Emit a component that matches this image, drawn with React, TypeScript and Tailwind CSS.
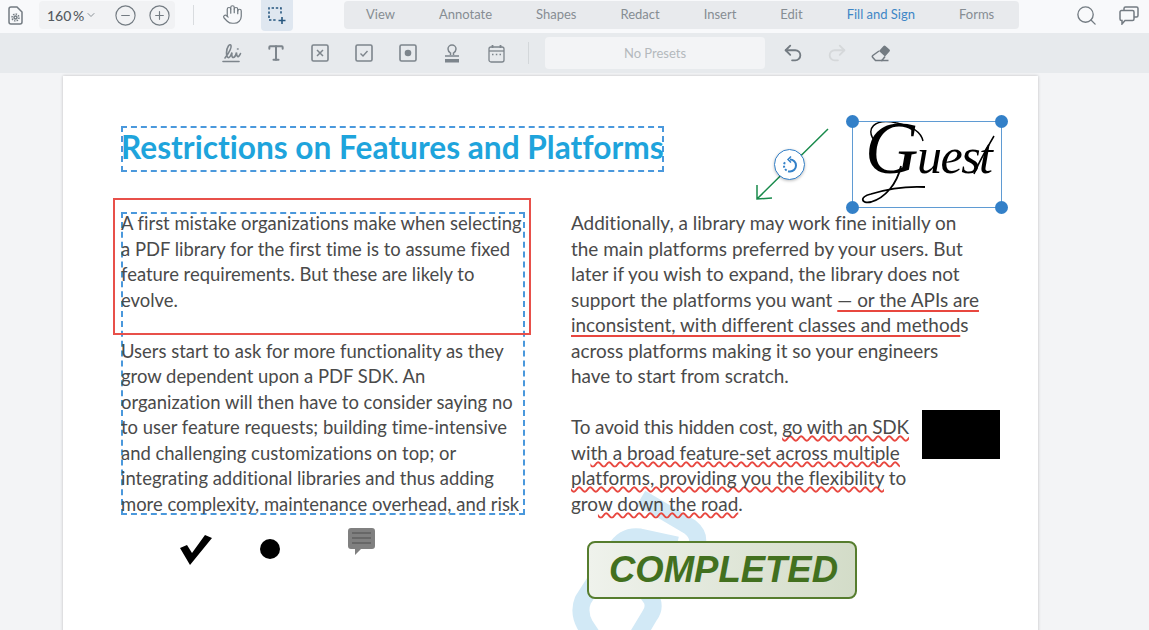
import { ChevronDown, CircleMinus, CirclePlus, Hand, Search, Undo2, Redo2, Type } from "lucide-react";

const tabs = ["View", "Annotate", "Shapes", "Redact", "Insert", "Edit", "Fill and Sign", "Forms"];

function BoxIcon({ children }: { children: React.ReactNode }) {
  return (
    <svg width="18" height="18" viewBox="0 0 18 18" fill="none" stroke="#7d858c">
      <rect x="1" y="1" width="16" height="16" rx="1.5" strokeWidth="1.6" />
      {children}
    </svg>
  );
}

function TopBar() {
  return (
    <div className="flex h-[33px] items-start bg-[#f8f9fb]">
      <svg className="ml-[8px] mt-[6px]" width="15" height="19" viewBox="0 0 15 19" fill="none" stroke="#737b82" strokeWidth="1.5">
        <path d="M1 3a2 2 0 0 1 2-2h6l5 5v10a2 2 0 0 1-2 2H3a2 2 0 0 1-2-2z" />
        <circle cx="7.5" cy="11.500" r="1.500" />
        <circle cx="7.5" cy="11.500" r="3.500" strokeDasharray="1.500 1.200" />
      </svg>
      <div className="ml-[16px] mt-px flex h-[28px] w-[136px] items-center rounded bg-[#f1f2f4] pl-[8px] text-[#555b61]">
        <span className="w-[36px] whitespace-nowrap text-[14px] font-medium [word-spacing:-2px]">160 %</span>
        <ChevronDown className="ml-[2px] text-[#8a9197]" size={12} />
        <CircleMinus className="ml-[17px] text-[#737b82]" size={23} strokeWidth={1.2} />
        <CirclePlus className="ml-[11px] text-[#737b82]" size={23} strokeWidth={1.2} />
      </div>
      <div className="ml-[18px] mt-[5px] h-[20px] w-px bg-[#d9dcdf]" />
      <Hand className="ml-[28px] mt-[4px] text-[#737b82]" size={21} strokeWidth={1.4} />
      <div className="ml-[18px] flex h-[31px] w-[32px] items-center justify-center rounded-b bg-[#dfe7f0]">
        <svg width="18" height="18" viewBox="0 0 18 18" fill="none" stroke="#27577f" strokeWidth="1.6">
          <path d="M1 11V1h12v7" strokeDasharray="2.4 1.8" />
          <path d="M1 13h8" strokeDasharray="2.4 1.8" />
          <path d="M14 10v7M10.5 13.5h7" />
        </svg>
      </div>
      <div className="ml-[51px] mt-px flex h-[28px] w-[675px] items-center rounded bg-[#e8eaed] text-[13px] text-[#868d93]">
        {tabs.map((tab) => (
          <span key={tab} className={`px-[22px] ${tab === "Fill and Sign" ? "text-[#3e86c6]" : ""}`}>
            {tab}
          </span>
        ))}
      </div>
      <Search className="ml-[56px] mt-[4px] text-[#737b82]" size={23} strokeWidth={1.4} />
      <svg className="ml-[21px] mt-[6px]" width="20" height="19" viewBox="0 0 20 19" fill="none" stroke="#737b82" strokeWidth="1.5">
        <path d="M5 4V2.5A1.5 1.5 0 0 1 6.5 1h11A1.5 1.5 0 0 1 19 2.5v7a1.5 1.5 0 0 1-1.5 1.5H15" />
        <path d="M2.5 4.500h11A1.5 1.5 0 0 1 15 6v7a1.500 1.500 0 0 1-1.500 1.500H6L3 18v-3.500h-.5A1.500 1.500 0 0 1 1 13V6a1.500 1.500 0 0 1 1.500-1.500z" />
      </svg>
    </div>
  );
}

function SecondBar() {
  return (
    <div className="flex h-[40px] items-center bg-[#e7eaed] pl-[210px]">
      <div className="flex h-[24px] w-[44px] items-center justify-center">
        <svg width="20" height="20" viewBox="0 0 20 20" fill="none" stroke="#7d858c" strokeWidth="1.6" strokeLinecap="round">
          <path d="M3 15C6 11 10 5 9 2.500S4.500 4 4.500 10c0 3 1 5 2.500 4.500s2-3 3-5c-.5 3 0 5.500 1.500 5s2.500-2.500 3-5c0 3 1 4.500 2 4s1.500-2 2-3" />
          <path d="M15.500 6h.6" />
          <path d="M1 18.500h16" />
        </svg>
      </div>
      <div className="flex h-[24px] w-[44px] items-center justify-center">
        <Type className="text-[#7d858c]" size={20} strokeWidth={2.4} />
      </div>
      <div className="flex h-[24px] w-[44px] items-center justify-center">
        <BoxIcon>
          <path d="M6 6l6 6M12 6l-6 6" strokeWidth="1.5" />
        </BoxIcon>
      </div>
      <div className="flex h-[24px] w-[44px] items-center justify-center">
        <BoxIcon>
          <path d="M5.500 9.500l2.500 2.500 4.500-5" strokeWidth="1.4" />
        </BoxIcon>
      </div>
      <div className="flex h-[24px] w-[44px] items-center justify-center">
        <BoxIcon>
          <circle cx="9" cy="9" r="3.300" fill="#7d858c" stroke="none" />
        </BoxIcon>
      </div>
      <div className="flex h-[24px] w-[44px] items-center justify-center">
        <svg width="16" height="19" viewBox="0 0 16 19" fill="none" stroke="#7d858c" strokeWidth="1.500">
          <path d="M6.500 11V9C5 8 4 7 4 5a4 4 0 0 1 8 0c0 2-1 3-2.500 4v2" />
          <path d="M1 12h14" />
          <path d="M1 15h14v3.500H1z" fill="#7d858c" stroke="none" />
        </svg>
      </div>
      <div className="flex h-[24px] w-[44px] items-center justify-center">
        <svg width="17" height="19" viewBox="0 0 17 19" fill="none" stroke="#7d858c" strokeWidth="1.300">
          <rect x="1" y="3" width="15" height="15" rx="2" />
          <path d="M1 7h15" />
          <path d="M4.500 1v3M12.500 1v3" strokeWidth="1.800" />
          <path d="M4 10.500h1.500M7.800 10.500h1.500M11.500 10.500H13" strokeWidth="1.500" />
        </svg>
      </div>
      <div className="ml-[10px] h-[22px] w-px bg-[#d3d7da]" />
      <div className="ml-[16px] flex h-[32px] w-[220px] items-center justify-center rounded bg-[#f3f4f6] pt-px text-[13px] text-[#b4b9bd]">
        No Presets
      </div>
      <Undo2 className="ml-[17px] text-[#737b82]" size={22} strokeWidth={2} />
      <Redo2 className="ml-[22px] text-[#d5d8da]" size={22} strokeWidth={2} />
      <svg className="ml-[23px]" width="20" height="18" viewBox="0 0 20 18" fill="none">
        <path d="M8 7l4.500-5q1-1 2 0l4 3.500q1 1 0 2L14 12.500z" fill="#737b82" />
        <path d="M8 7L1.800 11.500q-1 1 0 2L4.500 16.500h6.500l3-4" stroke="#737b82" strokeWidth="1.500" />
        <path d="M10 16.500h7.500" stroke="#737b82" strokeWidth="1.500" />
      </svg>
    </div>
  );
}

function Page() {
  return (
    <div className="relative ml-[63px] mt-[3px] h-[560px] w-[975px] overflow-hidden bg-white pl-[58px] pt-[50px] shadow-[0_0_3px_rgba(0,0,0,0.22)] [font-variant-ligatures:none]">
      {/* watermark behind the text */}
      <svg className="absolute left-[490px] top-[400px]" width="240" height="160" viewBox="0 0 240 160" fill="none" stroke="#d2e9f6" strokeWidth="17" strokeLinejoin="round">
        <path d="M88 22l49 29q10 8 7 18" />
        <path d="M124 69L87 61Q71 59 62 74L30 124Q25 136 32 149L42 164" />
        <path d="M85 114h7l7 10q3 8-2 15L79 169" />
      </svg>

      <h1 className="relative block h-[46px] w-[543px] whitespace-nowrap border-2 border-dashed border-[#4a98dc] text-[31.650px] font-bold leading-[38px] text-[#1ea4dc]">
        <span className="-ml-[2px] inline-block">Restrictions on Features and Platforms</span>
      </h1>

      <div className="relative mt-[40px] grid grid-cols-[450px_400px] leading-[25.500px] text-[#4a4a4a]">
        <div className="h-[303px] w-[404px] border-2 border-dashed border-[#4a98dc] text-[18.450px]">
          <p className="-ml-[2px] -mt-[3px] whitespace-nowrap">
            A first mistake organizations make when selecting
            <br />a PDF library for the first time is to assume fixed
            <br />feature requirements. But these are likely to
            <br />evolve.
          </p>
          <p className="-ml-[2px] mt-[25.500px] whitespace-nowrap">
            Users start to ask for more functionality as they
            <br />grow dependent upon a PDF SDK. An
            <br />organization will then have to consider saying no
            <br />to user feature requests; building time-intensive
            <br />and challenging customizations on top; or
            <br />integrating additional libraries and thus adding
            <br />more complexity, maintenance overhead, and risk
          </p>
        </div>
        <div className="-mt-[2px] whitespace-nowrap text-[18.950px] [text-decoration-skip-ink:none]">
          <p>
            Additionally, a library may work fine initially on
            <br />the main platforms preferred by your users. But
            <br />later if you wish to expand, the library does not
            <br />support the platforms you want{" "}
            <span className="underline decoration-[#e8473f] decoration-[1.500px] underline-offset-[3px]">— or the APIs are</span>
            <br />
            <span className="underline decoration-[#e8473f] decoration-[1.500px] underline-offset-[3px]">inconsistent, with different classes and method</span>s
            <br />across platforms making it so your engineers
            <br />have to start from scratch.
          </p>
          <p className="mt-[25.500px]">
            <span className="tracking-[-0.120px]">
              To avoid this hidden cost,{" "}
              <span className="underline decoration-[#e8473f] decoration-wavy decoration-[1.500px] underline-offset-[1px]">go with an SDK</span>
            </span>
            <br />
            wi<span className="underline decoration-[#e8473f] decoration-wavy decoration-[1.500px] underline-offset-[1px]">th a broad feature-set across multiple</span>
            <br />
            <span className="underline decoration-[#e8473f] decoration-wavy decoration-[1.500px] underline-offset-[1px]">platforms, providing you the flexibility</span> to
            <br />
            gro<span className="underline decoration-[#e8473f] decoration-wavy decoration-[1.500px] underline-offset-[1px]">w down the road</span>.
          </p>
        </div>
      </div>

      {/* annotations sitting on the page */}
      <div className="absolute left-[50px] top-[122px] h-[137px] w-[418px] border-2 border-[#e8504a]" />
      <div className="absolute left-[859px] top-[334px] h-[49px] w-[78px] bg-black" />

      <svg className="absolute left-[116px] top-[456px]" width="34" height="36" viewBox="0 0 34 36" fill="black">
        <path d="M1 16l7-3 5 8L26 3l7 3L11 33z" />
      </svg>
      <div className="absolute left-[197px] top-[463px] h-[20px] w-[20px] rounded-full bg-black" />
      <svg className="absolute left-[284px] top-[451px]" width="29" height="29" viewBox="0 0 29 29">
        <path d="M4 1h21a3 3 0 0 1 3 3v15a3 3 0 0 1-3 3H14l-6 6v-6H4a3 3 0 0 1-3-3V4a3 3 0 0 1 3-3z" fill="#808080" />
        <path d="M5 6h19M5 11h19M5 16h19" stroke="#4f4f4f" strokeWidth="1" />
      </svg>

      <div className="absolute left-[524px] top-[465px] flex h-[58px] w-[270px] items-center justify-center rounded-[8px] border-2 border-[#567d2e] bg-gradient-to-r from-[#eff2ec] to-[#d3dcc8] pl-[3px] font-['Liberation_Sans'] text-[36.500px] font-bold italic text-[#42701f]">
        COMPLETED
      </div>

      {/* rotation guide */}
      <svg className="absolute left-[690px] top-[50px]" width="80" height="76" viewBox="0 0 80 76" fill="none" stroke="#188a4b" strokeWidth="1.500">
        <path d="M75 3L5 72M4 59l0 14 15-1" />
      </svg>
      <div className="absolute left-[711px] top-[73px] flex h-[31px] w-[31px] items-center justify-center rounded-full border border-[#3380c8] bg-white shadow-[0_1px_3px_rgba(0,0,0,0.25)]">
        <svg width="18" height="18" viewBox="0 0 18 18" fill="none" stroke="#3380c8" strokeWidth="2">
          <path d="M9 3.500a6 6 0 0 1 0 12" />
          <path d="M9 15.500a6 6 0 0 1-6-6 6 6 0 0 1 2-4.500" strokeDasharray="2 1.500" />
          <path d="M10 0.500L7 3.500l3 3" strokeWidth="1.500" />
        </svg>
      </div>

      {/* signature */}
      <div className="absolute left-[789px] top-[45px] h-[87px] w-[150px] border border-[#5f9bd3]">
        <svg className="absolute left-0 top-0" width="150" height="85" viewBox="0 0 150 85" fill="none" stroke="black">
          <path d="M24 22C10 6 22 -4 44 1c14 3 24 8 26 18" strokeWidth="1.400" />
          <path d="M48 44C44 62 32 76 18 80c-10 2-12-5 0-8 16-5 36-8 54-7" strokeWidth="1.800" />
          <path d="M141 14C134 26 126 40 121 52" strokeWidth="1.500" />
        </svg>
        <div className="absolute left-[12px] -top-[3px] whitespace-nowrap font-['Liberation_Serif'] text-[50px] italic leading-[58px] tracking-[-1.500px] text-black">
          <span className="text-[74px]">G</span>uest
        </div>
        <span className="absolute -left-[7px] -top-[7px] h-[13px] w-[13px] rounded-full bg-[#3380c8]" />
        <span className="absolute -right-[7px] -top-[7px] h-[13px] w-[13px] rounded-full bg-[#3380c8]" />
        <span className="absolute -bottom-[7px] -left-[7px] h-[13px] w-[13px] rounded-full bg-[#3380c8]" />
        <span className="absolute -bottom-[7px] -right-[7px] h-[13px] w-[13px] rounded-full bg-[#3380c8]" />
      </div>
    </div>
  );
}

export default function App() {
  return (
    <div className="h-[630px] w-[1149px] overflow-hidden bg-[#f3f4f6] font-['Lato',sans-serif]">
      <TopBar />
      <SecondBar />
      <Page />
    </div>
  );
}
